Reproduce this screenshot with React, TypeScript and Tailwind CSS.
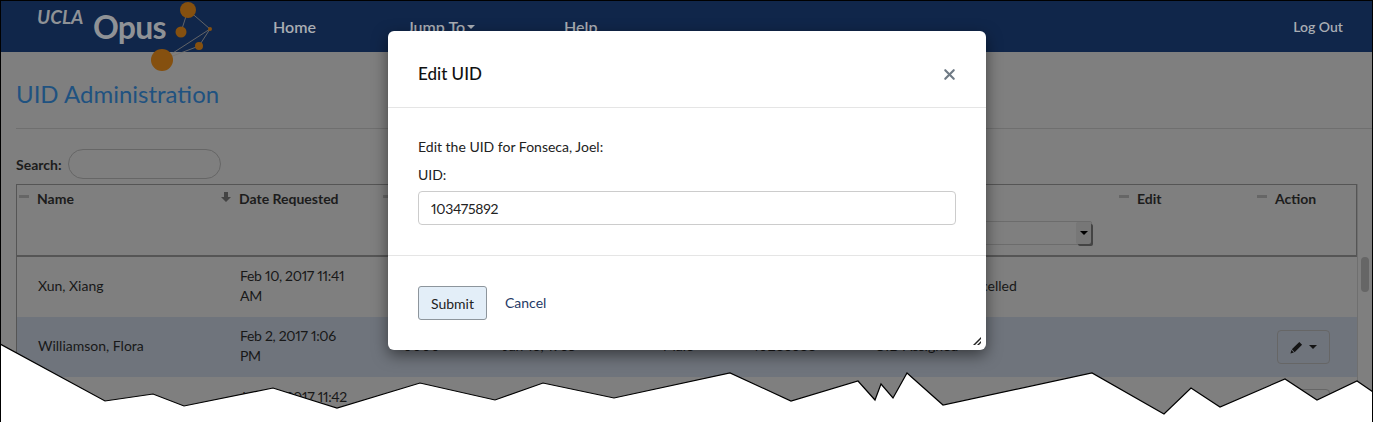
import { X } from "lucide-react";

const columns = "grid grid-cols-[202px_162px_100px_160px_90px_122px_264px_138px_102px]";

const tornEdge =
  "0,344 105,401 153,394 184,406 273,388 337,408 420,383 495,400 543,383 614,398 730,373 791,401 858,381 875,400 881,384 893,398 907,373 943,405 1092,373 1164,414 1191,388 1220,407 1285,379 1317,400 1357,381 1373,392";

function HeaderCell({ label, arrow }: { label?: string; arrow?: boolean }) {
  return (
    <div className="flex items-start pl-[2px] pt-[5px]">
      {arrow ? (
        <svg viewBox="0 0 10 10" className="mt-[2px] mr-[8px] h-[10px] w-[10px] fill-[#444]">
          <path d="M3 0h4v5h3L5 10 0 5h3z" />
        </svg>
      ) : (
        <span className="mt-[5px] mr-[8px] h-[3px] w-[10px] bg-[#666]" />
      )}
      {label && <span className="text-[14px] leading-[18px] font-bold text-[#1c1c1c]">{label}</span>}
    </div>
  );
}

function EditButton() {
  return (
    <button className="mt-[2px] flex h-[34px] w-[53px] items-center justify-center gap-[6px] rounded-[4px] border border-[#666]">
      <svg viewBox="0 0 14 14" className="h-[13px] w-[13px] fill-[#141414]">
        <path d="M10 1l3 3-8 8-3-3zM1.5 9.8l2.7 2.7L0.5 13.5z" />
      </svg>
      <span className="border-x-[4px] border-t-[4px] border-x-transparent border-t-[#141414]" />
    </button>
  );
}

function Row({
  name,
  date1,
  date2,
  cells,
  status,
  selected,
  button,
}: {
  name: string;
  date1: string;
  date2?: string;
  cells: string[];
  status: string;
  selected?: boolean;
  button?: boolean;
}) {
  return (
    <div className={`${columns} h-[60px] pb-[2px] text-[14px] leading-[20px] whitespace-nowrap text-[#181818] ${date2 ? "items-center" : "items-start pt-[10px]"} ${selected ? "bg-[#6f747c]" : ""}`}>
      <div className="pl-[21px]">{name}</div>
      <div className="pl-[21px] tracking-[-0.3px]">
        {date1}
        {date2 && <br />}
        {date2}
      </div>
      {cells.map((c, i) => (
        <div key={i} className="pl-[22px]">
          {c}
        </div>
      ))}
      <div className="pl-[22px]">{status}</div>
      <div />
      <div className="pl-[22px]">{button && <EditButton />}</div>
    </div>
  );
}

export default function App() {
  return (
    <div className="relative h-[422px] w-[1373px] overflow-hidden border-x border-t border-black bg-[#7f7f7f] font-['Lato','Liberation_Sans',sans-serif] proportional-nums">
      {/* Navbar */}
      <nav className="flex h-[51px] items-start bg-[#10264a] text-[16px] font-semibold text-[#a9adb3]">
        <div className="relative h-[51px] w-[272px] shrink-0">
          <span className="absolute left-[36px] top-[6px] text-[19px] leading-[20px] font-bold italic text-[#8f9296]">UCLA</span>
          <span className="absolute left-[92px] top-[7px] text-[32px] leading-[38px] font-bold tracking-[-0.8px] text-[#8f9296]">Opus</span>
        </div>
        <span className="mt-[14px] w-[134px]">Home</span>
        <span className="mt-[14px] flex w-[157px] items-center gap-[2px]">
          Jump To
          <span className="border-x-[4px] border-t-[4px] border-x-transparent border-t-[#a9adb3]" />
        </span>
        <span className="mt-[14px]">Help</span>
        <span className="mt-[14px] ml-auto mr-[29px] text-[14px] leading-[24px]">Log Out</span>
      </nav>

      {/* Page */}
      <h1 className="mt-[27px] ml-[15px] text-[24px] leading-[30px] text-[#1f5280]">UID Administration</h1>
      <div className="mt-[19px] ml-[15px] h-px bg-[#6f6f6f]" />
      <div className="mt-[20px] ml-[15px] flex items-center gap-[5px]">
        <label className="w-[47px] text-[14px] font-bold text-[#1c1c1c]">Search:</label>
        <div className="h-[30px] w-[153px] rounded-[15px] border border-[#666]" />
      </div>
      <div className="mt-[5px] ml-[15px] flex">
        <div className="w-[1341px] border-l border-[#555]">
          <div className={`${columns} h-[73px] border-t border-r border-b-[2px] border-[#555]`}>
            <HeaderCell label="Name" />
            <HeaderCell label="Date Requested" arrow />
            <HeaderCell />
            <HeaderCell />
            <HeaderCell />
            <HeaderCell />
            <div className="relative">
              <div className="absolute right-[25px] top-[36px] flex h-[24px] w-[220px] justify-end rounded-[2px] border border-[#6c6c6c]">
                <span className="flex w-[15px] items-center justify-center rounded-[2px] bg-[#777] shadow-[2px_2px_0_#444]">
                  <span className="border-x-[4px] border-t-[4px] border-x-transparent border-t-black" />
                </span>
              </div>
            </div>
            <HeaderCell label="Edit" />
            <HeaderCell label="Action" />
          </div>
          <Row
            name="Xun, Xiang"
            date1="Feb 10, 2017 11:41"
            date2="AM"
            cells={["", "", "", ""]}
            status="UID Request Cancelled"
          />
          <Row
            name="Williamson, Flora"
            date1="Feb 2, 2017 1:06"
            date2="PM"
            cells={["0000", "Jan 16, 1965", "Male", "10286688"]}
            status="UID Assigned"
            selected
            button
          />
          <Row
            name=""
            date1="Jan 30, 2017 11:42"
            cells={["", "", "", ""]}
            status=""
            button
          />
        </div>
        <div className="relative w-[15px] border-l border-[#6f6f6f]">
          <span className="absolute left-[3px] top-[73px] h-[35px] w-[8px] rounded-full bg-[#666]" />
        </div>
      </div>

      {/* Torn bottom edge */}
      <svg viewBox="0 0 1373 422" className="absolute -left-px -top-px h-[422px] w-[1373px]">
        <polygon points={`${tornEdge} 1373,422 0,422`} fill="#fff" />
        <polyline points={tornEdge} fill="none" stroke="#000" strokeWidth="1.2" />
      </svg>

      {/* Logo dots lie over the navbar edge */}
      <svg viewBox="0 0 230 80" className="absolute -left-px -top-px h-[80px] w-[230px]">
        <g stroke="#77746f" strokeWidth="0.8" fill="none">
          <path d="M188 10L181 32M188 10L210 29L199 46L162 60L210 29" />
        </g>
        <g fill="#85500f">
          <circle cx="188" cy="10" r="8" />
          <circle cx="181" cy="32" r="5.5" />
          <circle cx="199" cy="46" r="4" />
          <circle cx="210" cy="29" r="2" />
          <circle cx="162" cy="60" r="11" />
        </g>
      </svg>

      {/* Modal */}
      <div className="absolute left-[387px] top-[30px] h-[319px] w-[598px] rounded-[6px] bg-white text-[14px] text-[#222] shadow-[0_5px_15px_rgba(0,0,0,0.5)]">
        <div className="flex h-[77px] items-center justify-between border-b border-[#e5e5e5] pt-[10px] pl-[30px] pr-[28px]">
          <h4 className="text-[17px] font-medium text-[#111]">Edit UID</h4>
          <X size={17} strokeWidth={3} className="text-[#6f7a85]" />
        </div>
        <div className="h-[148px] border-b border-[#e5e5e5] px-[30px] pt-[29px]">
          <p className="leading-[20px]">Edit the UID for Fonseca, Joel:</p>
          <p className="mt-[8px] leading-[20px]">UID:</p>
          <input
            readOnly
            value="103475892"
            className="mt-[6px] h-[34px] w-[538px] rounded-[4px] border border-[#ccc] px-[12px] text-[14px] tracking-[-0.3px] text-[#222] outline-none"
          />
        </div>
        <div className="flex items-center gap-[18px] px-[30px] pt-[30px]">
          <button className="h-[34px] w-[69px] rounded-[3px] border border-[#8d959c] bg-[#e3eef8] text-[14px] text-[#222]">Submit</button>
          <a className="mb-[2px] text-[14px] text-[#1f3a66]">Cancel</a>
        </div>
        <svg viewBox="0 0 8 8" className="absolute bottom-[5px] right-[5px] h-[8px] w-[8px] fill-[#222]">
          <path d="M0 8L8 0V2L2 8zM4 8L8 4V6L6 8z" />
        </svg>
      </div>
    </div>
  );
}
